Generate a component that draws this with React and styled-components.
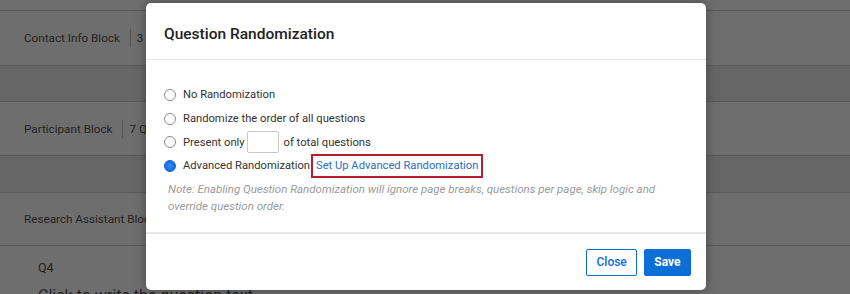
import React from "react";
import styled, { createGlobalStyle } from "styled-components";

const Global = createGlobalStyle`
  html, body { margin: 0; padding: 0; }
  body {
    width: 850px; height: 294px; overflow: hidden;
    font-family: Roboto, "Liberation Sans", sans-serif;
    background: #6e6e6e;
  }
  * { box-sizing: border-box; }
`;

const Page = styled.div`
  position: relative;
  width: 850px;
  height: 294px;
  overflow: hidden;
`;

const Backdrop = styled.div`
  display: flex;
  flex-direction: column;
`;

const Band = styled.div`
  height: ${(p) => p.$h}px;
  background: ${(p) => (p.$spacer ? "#666666" : "#6e6e6e")};
  border-bottom: 1px solid #5a5a5a;
  display: flex;
  align-items: center;
  padding-left: 24px;
  color: #232323;
  font-size: 11.7px;
`;

const Sep = styled.span`
  display: inline-block;
  width: 1px;
  height: 18px;
  background: #555;
  margin: 0 6px 0 10px;
`;

const Question = styled.div`
  padding: 14px 0 0 38px;
  color: #232323;
  display: flex;
  flex-direction: column;
  gap: 11px;
`;

const QLabel = styled.div`
  font-size: 12.5px;
`;

const QText = styled.div`
  font-size: 16px;
`;

const Modal = styled.div`
  position: absolute;
  left: 146px;
  top: 3px;
  width: 560px;
  height: 287px;
  background: #fff;
  border-radius: 5px;
  box-shadow: 0 0 12px rgba(0, 0, 0, 0.35);
  display: flex;
  flex-direction: column;
`;

const Header = styled.div`
  height: 57px;
  border-bottom: 1px solid #e4e4e4;
  display: flex;
  align-items: center;
  padding: 5px 18px 0;
`;

const Title = styled.h2`
  margin: 0;
  font-size: 15.5px;
  font-weight: 500;
  color: #222;
`;

const Body = styled.div`
  flex: 1;
  padding: 23px 18px 0;
  display: flex;
  flex-direction: column;
  border-bottom: 2px solid #e8e8e8;
`;

const Option = styled.label`
  display: flex;
  align-items: center;
  height: 23.7px;
  font-size: 11.2px;
  color: #333;
  gap: 7px;
`;

const Radio = styled.span`
  width: 12px;
  height: 12px;
  border-radius: 50%;
  flex: none;
  border: 1px solid ${(p) => (p.$checked ? "#0b5fc9" : "#8a8a8a")};
  background: ${(p) =>
    p.$checked ? "radial-gradient(circle at 50% 50%, #3a8cf0 0, #1a72e6 60%, #0d63d6 100%)" : "#fff"};
`;

const NumBox = styled.span`
  display: inline-block;
  width: 32px;
  height: 22px;
  border: 1px solid #c8c8c8;
  border-radius: 2px;
  margin: 0 -2px 0 -5px;
`;

const LinkBox = styled.span`
  border: 2px solid #b51f2e;
  padding: 3px 3px 4px 3px;
  margin-left: -6px;
  color: #2a6ec2;
`;

const Note = styled.p`
  margin: 3px 0 0 4px;
  font-size: 11.5px;
  font-style: italic;
  color: #9a9a9a;
  line-height: 17px;
  width: 500px;
`;

const Footer = styled.div`
  height: 56px;
  display: flex;
  justify-content: flex-end;
  align-items: center;
  padding: 0 15px 0 0;
  gap: 7px;
`;

const Button = styled.button`
  height: 27px;
  padding: 0 ${(p) => (p.$primary ? 9.5 : 9)}px;
  font-family: inherit;
  font-size: 12px;
  font-weight: ${(p) => (p.$primary ? 700 : 500)};
  border-radius: 2px;
  border: 1px solid #0b6ed8;
  background: ${(p) => (p.$primary ? "#0b6fd6" : "#fff")};
  color: ${(p) => (p.$primary ? "#fff" : "#0b6ed8")};
`;

export default function App() {
  return (
    <Page>
      <Global />
      <Backdrop>
        <Band $h={11} />
        <Band $h={55}>
          Contact Info Block<Sep />3
        </Band>
        <Band $h={36} $spacer />
        <Band $h={54}>
          Participant Block<Sep />7 Q
        </Band>
        <Band $h={37} $spacer />
        <Band $h={53}>Research Assistant Block</Band>
        <Question>
          <QLabel>Q4</QLabel>
          <QText>Click to write the question text</QText>
        </Question>
      </Backdrop>
      <Modal>
        <Header>
          <Title>Question Randomization</Title>
        </Header>
        <Body>
          <Option>
            <Radio />
            No Randomization
          </Option>
          <Option>
            <Radio />
            Randomize the order of all questions
          </Option>
          <Option>
            <Radio />
            Present only <NumBox /> of total questions
          </Option>
          <Option>
            <Radio $checked />
            Advanced Randomization <LinkBox>Set Up Advanced Randomization</LinkBox>
          </Option>
          <Note>
            Note: Enabling Question Randomization will ignore page breaks, questions per page, skip logic and
            override question order.
          </Note>
        </Body>
        <Footer>
          <Button>Close</Button>
          <Button $primary>Save</Button>
        </Footer>
      </Modal>
    </Page>
  );
}
